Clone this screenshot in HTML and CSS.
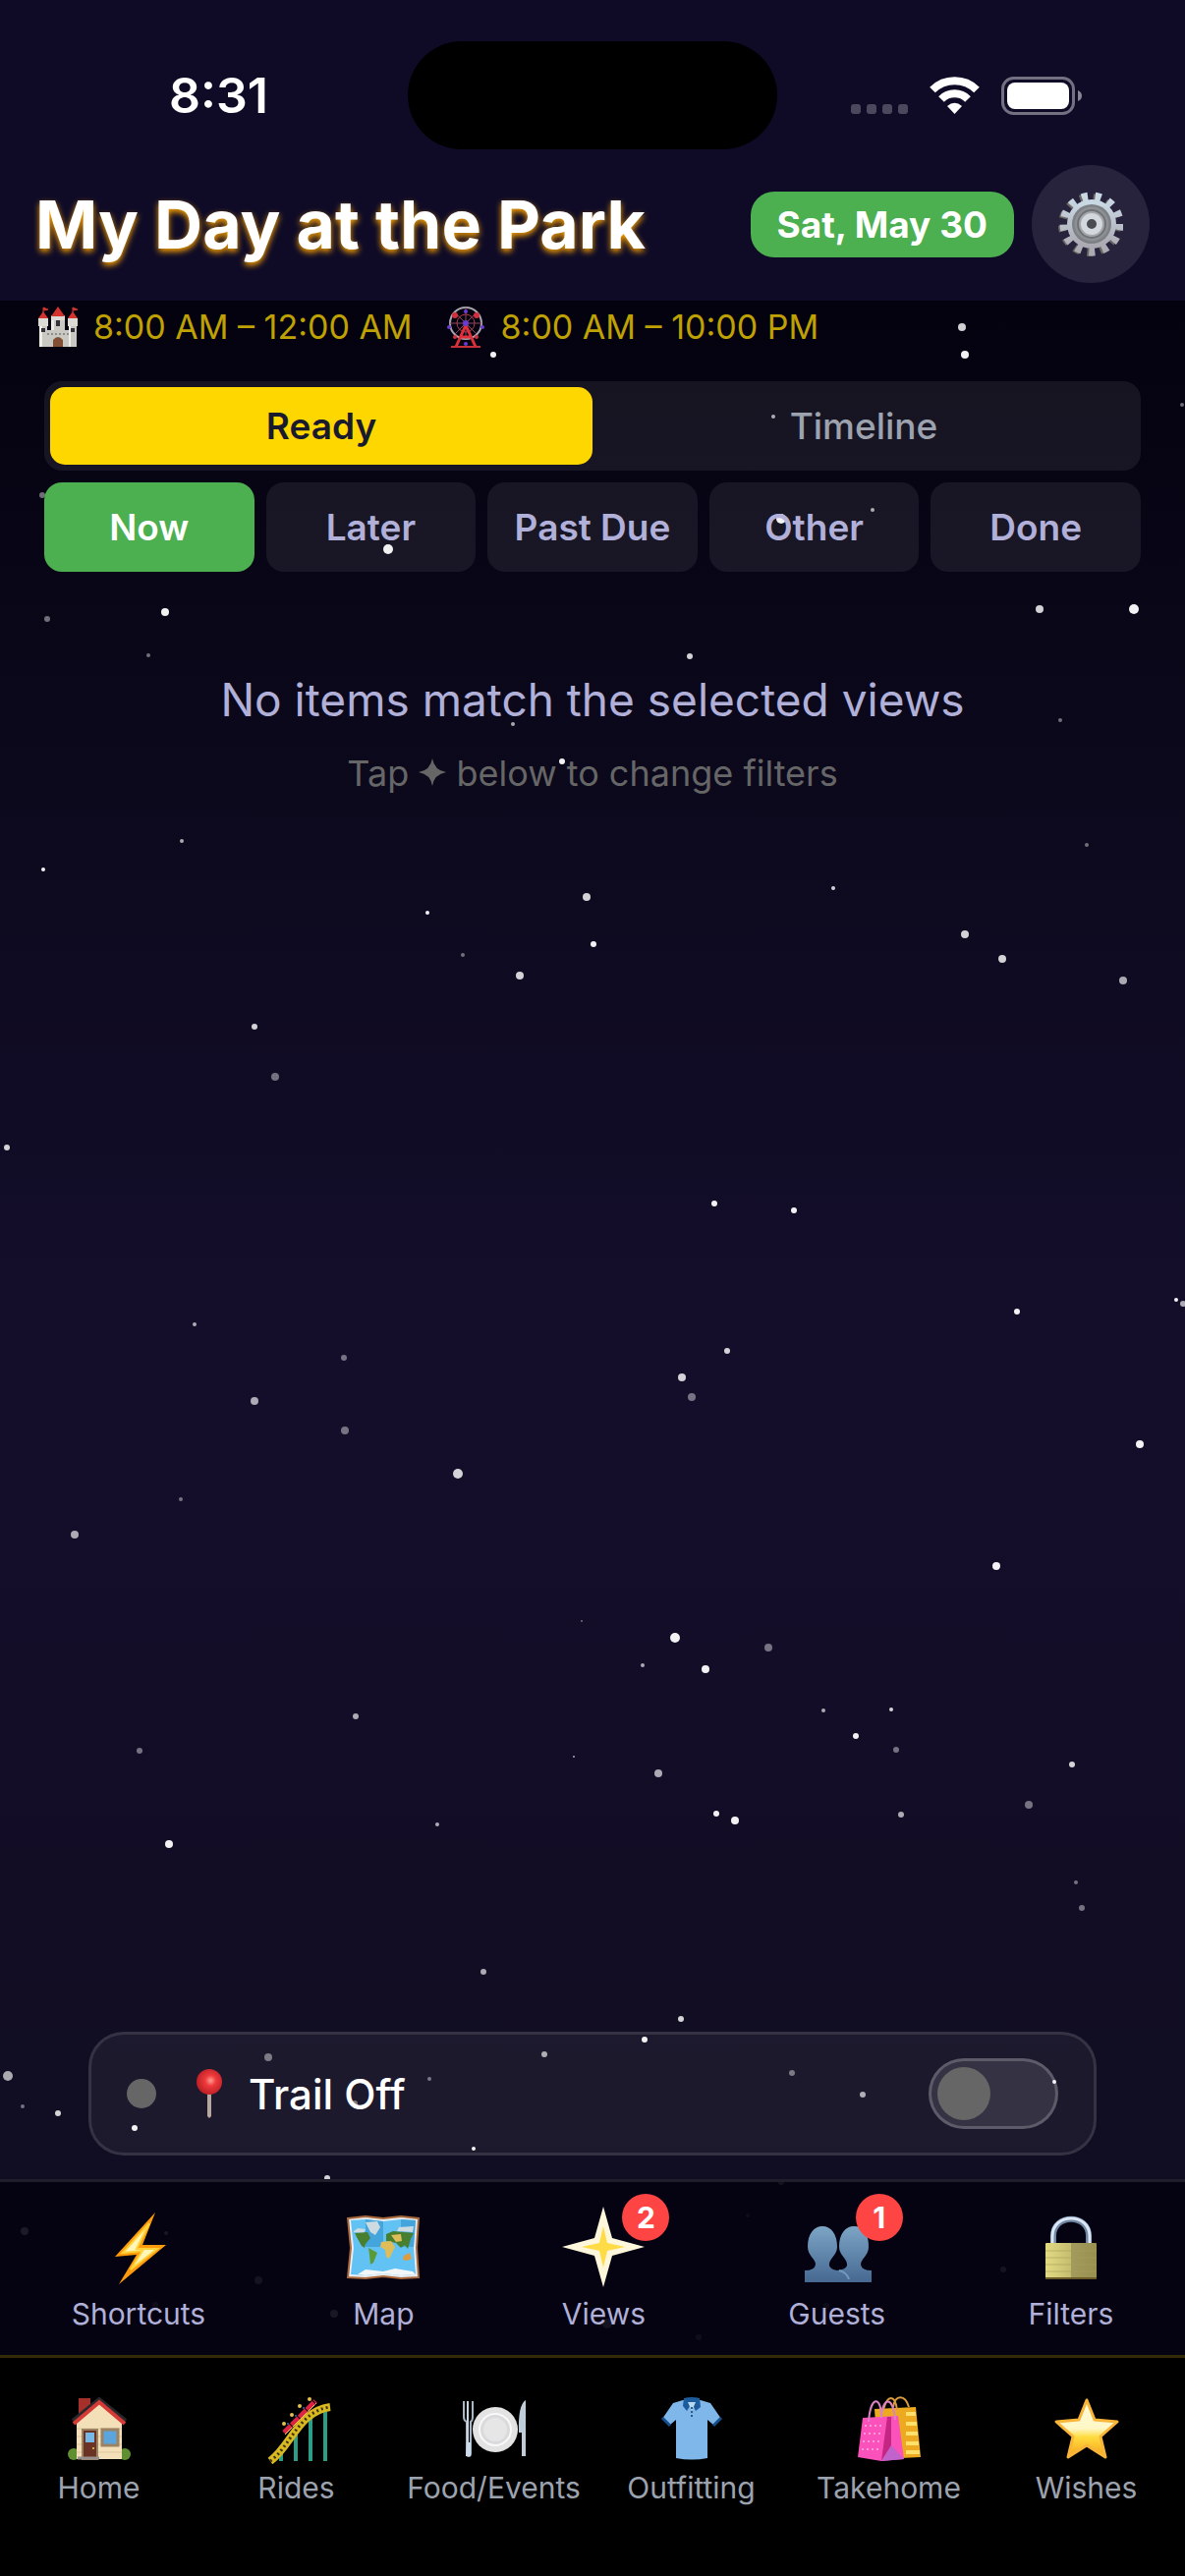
FILE: index.html
```html
<!DOCTYPE html>
<html lang="en">
<head>
  <meta charset="UTF-8">
  <meta name="viewport" content="width=device-width, initial-scale=1.0">
  <title>My Day at the Park</title>
  <link rel="stylesheet" href="styles.css">
</head>
<body>
  <!-- starfield -->
  <svg class="stars" viewBox="0 0 1206 2622" preserveAspectRatio="none" aria-hidden="true">
    <g opacity="0.95">
      <circle cx="982" cy="361" r="4"/><circle cx="502" cy="361" r="3"/><circle cx="395" cy="559" r="5"/>
      <circle cx="795" cy="528" r="5"/><circle cx="1154" cy="620" r="5"/><circle cx="168" cy="623" r="4"/>
      <circle cx="572" cy="775" r="3"/><circle cx="44" cy="885" r="2"/><circle cx="435" cy="929" r="2"/>
      <circle cx="604" cy="961" r="3"/><circle cx="727" cy="1225" r="3"/><circle cx="808" cy="1232" r="3"/>
      <circle cx="1197" cy="1323" r="2"/><circle cx="1035" cy="1335" r="3"/><circle cx="1160" cy="1470" r="4"/>
      <circle cx="1014" cy="1594" r="4"/><circle cx="687" cy="1667" r="5"/><circle cx="718" cy="1699" r="4"/>
      <circle cx="871" cy="1767" r="3"/><circle cx="729" cy="1846" r="3"/><circle cx="748" cy="1853" r="4"/>
      <circle cx="172" cy="1877" r="4"/><circle cx="656" cy="2076" r="3"/><circle cx="1073" cy="2119" r="2"/>
      <circle cx="137" cy="2166" r="3"/><circle cx="482" cy="2187" r="2"/><circle cx="25" cy="2271" r="4"/>
    </g>
    <g opacity="0.82">
      <circle cx="702" cy="668" r="3"/><circle cx="1058" cy="620" r="4"/><circle cx="979" cy="333" r="4"/>
      <circle cx="597" cy="913" r="4"/><circle cx="529" cy="993" r="4"/><circle cx="848" cy="904" r="2"/>
      <circle cx="982" cy="951" r="4"/><circle cx="1020" cy="976" r="4"/><circle cx="259" cy="1045" r="3"/>
      <circle cx="7" cy="1168" r="3"/><circle cx="740" cy="1375" r="3"/><circle cx="694" cy="1402" r="4"/>
      <circle cx="466" cy="1500" r="5"/><circle cx="907" cy="1740" r="2"/><circle cx="1091" cy="1796" r="3"/>
      <circle cx="693" cy="2055" r="3"/><circle cx="59" cy="2151" r="3"/><circle cx="333" cy="2217" r="3"/>
      <circle cx="169" cy="2273" r="2"/><circle cx="340" cy="2355" r="4"/>
    </g>
    <g opacity="0.65">
      <circle cx="185" cy="856" r="2"/><circle cx="522" cy="737" r="2"/><circle cx="787" cy="424" r="2"/>
      <circle cx="888" cy="519" r="2"/><circle cx="1143" cy="998" r="4"/><circle cx="198" cy="1348" r="2"/>
      <circle cx="259" cy="1426" r="4"/><circle cx="76" cy="1562" r="4"/><circle cx="654" cy="1695" r="2"/>
      <circle cx="838" cy="1741" r="2"/><circle cx="362" cy="1747" r="3"/><circle cx="584" cy="1788" r="1"/>
      <circle cx="670" cy="1805" r="4"/><circle cx="917" cy="1847" r="3"/><circle cx="445" cy="1857" r="2"/>
      <circle cx="492" cy="2007" r="3"/><circle cx="1204" cy="1327" r="3"/><circle cx="8" cy="2113" r="5"/>
      <circle cx="554" cy="2091" r="3"/><circle cx="878" cy="2132" r="3"/><circle cx="263" cy="2321" r="4"/>
      <circle cx="795" cy="2221" r="3"/><circle cx="1021" cy="2310" r="3"/><circle cx="618" cy="2365" r="5"/>
    </g>
    <g opacity="0.42">
      <circle cx="43" cy="504" r="3"/><circle cx="48" cy="630" r="3"/><circle cx="151" cy="667" r="2"/>
      <circle cx="1203" cy="412" r="2"/><circle cx="1079" cy="733" r="2"/><circle cx="1106" cy="860" r="2"/>
      <circle cx="471" cy="972" r="2"/><circle cx="280" cy="1096" r="4"/><circle cx="350" cy="1382" r="3"/>
      <circle cx="704" cy="1422" r="4"/><circle cx="351" cy="1456" r="4"/><circle cx="184" cy="1526" r="2"/>
      <circle cx="592" cy="1650" r="1"/><circle cx="782" cy="1677" r="4"/><circle cx="912" cy="1781" r="3"/>
      <circle cx="142" cy="1782" r="3"/><circle cx="1047" cy="1837" r="4"/><circle cx="1095" cy="1916" r="2"/>
      <circle cx="1101" cy="1942" r="3"/><circle cx="23" cy="2144" r="2"/><circle cx="273" cy="2094" r="4"/>
      <circle cx="437" cy="2116" r="2"/><circle cx="361" cy="2141" r="3"/><circle cx="806" cy="2110" r="3"/>
      <circle cx="761" cy="2255" r="2"/><circle cx="841" cy="2347" r="3"/><circle cx="711" cy="2379" r="3"/>
      <circle cx="158" cy="2346" r="3"/>
    </g>
  </svg>

  <header class="header">
    <div class="status-bar">
      <span class="clock">8:31</span>
      <span class="island"></span>
      <svg class="status-icons" viewBox="0 0 236 44" aria-hidden="true">
        <g fill="#fff" opacity="0.25">
          <rect x="0" y="31" width="10" height="10" rx="3"/><rect x="16" y="31" width="10" height="10" rx="3"/>
          <rect x="32" y="31" width="10" height="10" rx="3"/><rect x="48" y="31" width="10" height="10" rx="3"/>
        </g>
        <g fill="none" stroke="#fff" stroke-width="8">
          <path d="M83 16.500 A32 32 0 0 1 128 16.500"/>
          <path d="M92 26 A19 19 0 0 1 119 26"/>
        </g>
        <path d="M105.500 41 L98 33 Q105.500 26.500 113 33 Z" fill="#fff"/>
        <rect x="154.500" y="4.500" width="72" height="36" rx="11" fill="none" stroke="#fff" stroke-width="3" opacity="0.42"/>
        <rect x="159" y="9" width="63" height="27" rx="8" fill="#fff"/>
        <path d="M231 17 Q235 18.500 235 22.500 Q235 26.500 231 28 Z" fill="#fff" opacity="0.5"/>
      </svg>
    </div>
    <div class="title-row">
      <h1>My Day at the Park</h1>
      <button class="date-chip" type="button">Sat, May 30</button>
      <button class="settings-btn" type="button" aria-label="Settings">
        <svg viewBox="0 0 66 66" aria-hidden="true">
          <defs>
            <linearGradient id="steel" x1="0" y1="0" x2="0" y2="1">
              <stop offset="0" stop-color="#c9d9e4"/><stop offset="1" stop-color="#aba9b2"/>
            </linearGradient>
          </defs>
          <circle cx="32" cy="34" r="28" fill="none" stroke="#6c6862" stroke-width="8" stroke-dasharray="6 7.533"/>
          <circle cx="34" cy="33" r="28" fill="none" stroke="url(#steel)" stroke-width="9" stroke-dasharray="6 7.533"/>
          <circle cx="34" cy="33" r="22" fill="none" stroke="url(#steel)" stroke-width="6"/>
          <circle cx="34" cy="33" r="20" fill="#7d8084"/>
          <circle cx="34" cy="33" r="16" fill="#a4a6a9" stroke="#8d9094" stroke-width="3"/>
          <circle cx="34" cy="33" r="14" fill="none" stroke="#6f7276" stroke-width="2"/>
          <circle cx="34" cy="33" r="8" fill="#4a4c52" stroke="#d3d7de" stroke-width="6"/>
        </svg>
      </button>
    </div>
  </header>

  <main class="content">
    <div class="hours">
      <span class="park">
        <svg viewBox="0 0 40 42" aria-hidden="true">
          <path d="M1 19 H9 V24 H13 V10 H27 V24 H31 V19 H39 V41 H1 Z" fill="#c9c8c3"/>
          <path d="M1 19 H4 V41 H1 Z M13 10 H16 V24 H13 Z M31 19 H33 V41 H31 Z" fill="#eeede8"/>
          <path d="M0 12 H10 V20 H0 Z M30 12 H40 V20 H30 Z M13 9 H27 V14 H13 Z" fill="#dcdbd6"/>
          <path d="M0 12 L5 5 L10 12 Z M30 12 L35 5 L40 12 Z M13 10 L20 0 L27 10 Z" fill="#d2332f"/>
          <path d="M5 6 V1 L10 3 L5 4 M35 6 V1 L40 3 L35 4" fill="#d2332f" stroke="#d2332f"/>
          <path d="M9 28 H31" stroke="#8f8e8a" stroke-width="2" stroke-dasharray="2 2"/>
          <path d="M15 41 V34 Q20 28 25 34 V41 Z" fill="#815034"/>
          <path d="M3 22 H7 V26 H3 Z M33 22 H37 V26 H33 Z M18 14 H22 V20 H18 Z" fill="#34323c"/>
        </svg>
        8:00 AM – 12:00 AM
      </span>
      <span class="park">
        <svg viewBox="0 0 40 42" aria-hidden="true">
          <circle cx="20" cy="17" r="16" fill="none" stroke="#a6a5ad" stroke-width="2"/>
          <circle cx="20" cy="17" r="9" fill="none" stroke="#b23b4a"/>
          <path d="M20 1 V33 M4 17 H36 M9 6 L31 28 M31 6 L9 28" stroke="#8c4660"/>
          <path d="M20 19 L10 41 M20 19 L30 41 M15 31 H25" stroke="#e02f3a" stroke-width="3" fill="none"/>
          <path d="M5 41 H35" stroke="#c5303a" stroke-width="2"/>
          <g fill="#6a3bd0"><circle cx="20" cy="17" r="3"/><circle cx="20" cy="5" r="2"/><circle cx="3" cy="21" r="2"/><circle cx="37" cy="21" r="2"/><circle cx="20" cy="38" r="2"/></g>
          <g fill="#d22f3d"><circle cx="9" cy="9" r="3"/><circle cx="31" cy="9" r="3"/><circle cx="9" cy="31" r="2"/><circle cx="31" cy="31" r="2"/></g>
        </svg>
        8:00 AM – 10:00 PM
      </span>
    </div>

    <div class="segment">
      <button class="segment-btn active" type="button">Ready</button>
      <button class="segment-btn" type="button">Timeline</button>
    </div>
    <div class="filters">
      <button class="filter-btn active" type="button">Now</button>
      <button class="filter-btn" type="button">Later</button>
      <button class="filter-btn" type="button">Past Due</button>
      <button class="filter-btn" type="button">Other</button>
      <button class="filter-btn" type="button">Done</button>
    </div>

    <div class="empty">
      <p class="empty-title">No items match the selected views</p>
      <p class="empty-hint">Tap
        <svg viewBox="0 0 28 28" role="img" aria-label="Views"><path d="M14 0 Q16 12 28 14 Q16 16 14 28 Q12 16 0 14 Q12 12 14 0 Z" fill="#666"/></svg>
        below to change filters</p>
    </div>

    <div class="trail">
      <span class="trail-dot"></span>
      <label class="trail-label" for="trail">
        <svg viewBox="0 0 48 52" aria-hidden="true">
          <defs>
            <radialGradient id="pin" cx="0.55" cy="0.45" r="0.6">
              <stop offset="0" stop-color="#ff9d90"/><stop offset="0.35" stop-color="#ef3a3c"/><stop offset="1" stop-color="#b51c22"/>
            </radialGradient>
          </defs>
          <path d="M22 24 H26 V49 L24 51 L22 49 Z" fill="#b8a79f"/>
          <circle cx="24" cy="14" r="13" fill="url(#pin)"/>
        </svg>
        Trail Off
      </label>
      <input class="switch" type="checkbox" id="trail">
    </div>
  </main>

  <div class="toolbar">
    <button class="tool" type="button">
      <span class="tool-icon">
        <svg viewBox="0 0 84 84" aria-hidden="true">
          <path d="M59 7 L18 52 L40 50 L22 80 L70 40 L46 40 Z" fill="#ff9b0a"/>
          <path d="M53 18 L26 48 L46 46 L34 65 L61 44 L40 44 Z" fill="#fff6b8" stroke="#ffd23c" stroke-width="2"/>
        </svg>
      </span>
      Shortcuts
    </button>
    <button class="tool" type="button">
      <span class="tool-icon">
        <svg viewBox="0 0 84 84" aria-hidden="true">
          <path d="M6 13 L24 11 L42 13 L60 11 L78 13 L76 43 L78 73 L60 74 L42 72 L24 74 L6 73 L9 43 Z" fill="#e8eef2" stroke="#a8683c" stroke-width="2"/>
          <path d="M9 15 L24 14 L42 16 L60 14 L75 15 L73 43 L75 70 L60 71 L42 69 L24 71 L9 70 L12 43 Z" fill="#62c2f4"/>
          <path d="M24 14 L42 16 V42 H24 Z M60 14 L75 15 L73 42 H60 Z" fill="#3a9bd4" opacity="0.75"/>
          <path d="M24 17 L36 16 L39 22 L34 30 L29 27 Z M12 26 L16 23 L24 24 L22 28 L12 27 Z M58 22 L73 21 L72 27 L56 26 Z" fill="#cddbe1"/>
          <path d="M13 28 L26 27 L29 33 L24 39 L23 43 L28 46 L20 41 L15 32 Z M45 29 L52 26 L73 28 L70 34 L67 44 L64 40 L60 43 L55 38 L45 36 Z" fill="#477f2e"/>
          <path d="M27 43 L36 48 L32 58 L29 60 L28 50 Z" fill="#5b9b37"/>
          <path d="M40 37 L50 36 L54 42 L48 54 L45 52 L44 45 L39 42 Z M50 30 L60 29 L61 36 L55 37 Z" fill="#dfbd58"/>
          <path d="M63 51 L69 48 L71 54 L66 56 L62 55 Z" fill="#df9b3d"/>
          <path d="M16 70 L24 65 L42 67 L54 64 L72 67 L75 70 L60 71 L42 69 L24 71 Z" fill="#f4f7f8"/>
        </svg>
      </span>
      Map
    </button>
    <button class="tool" type="button">
      <span class="tool-icon">
        <svg viewBox="0 0 84 84" aria-hidden="true">
          <path d="M42 1 L51 33 L84 42 L51 51 L42 83 L33 51 L0 42 L33 33 Z" fill="#fff7dc"/>
          <path d="M42 21 L46 38 L64 42 L46 46 L42 63 L38 46 L20 42 L38 38 Z" fill="#ffdb45"/>
        </svg>
        <span class="badge">2</span>
      </span>
      Views
    </button>
    <button class="tool" type="button">
      <span class="tool-icon">
        <svg viewBox="0 0 84 84" aria-hidden="true">
          <defs>
            <linearGradient id="people" x1="0" y1="0" x2="0" y2="1">
              <stop offset="0" stop-color="#7ca5c5"/><stop offset="1" stop-color="#466891"/>
            </linearGradient>
          </defs>
          <path d="M27 21 C36 21 42 29 42 42 C42 51 33 54 34 61 Q35 65 42 66 Q51 65 52 61 C53 54 44 51 44 42 C44 29 50 21 59 21 C69 21 74 29 74 42 C74 51 66 54 66 60 Q67 66 77 66 V78 H9 V66 Q19 66 20 60 C20 54 12 51 12 42 C12 29 18 21 27 21 Z" fill="url(#people)"/>
          <path d="M44 66 Q52 68 54 75" fill="none" stroke="#7199bb" stroke-width="2"/>
        </svg>
        <span class="badge">1</span>
      </span>
      Guests
    </button>
    <button class="tool" type="button">
      <span class="tool-icon">
        <svg viewBox="0 0 84 84" aria-hidden="true">
          <defs>
            <linearGradient id="brass">
              <stop offset="0" stop-color="#e2db82"/><stop offset="0.49" stop-color="#c6be70"/><stop offset="0.5" stop-color="#a39b5c"/><stop offset="1" stop-color="#98904f"/>
            </linearGradient>
          </defs>
          <path d="M24 40 V31 C24 8 60 8 60 31 V40" fill="none" stroke="#7187a4" stroke-width="6"/>
          <path d="M23 40 V31 C23 7 61 7 61 31 V40" fill="none" stroke="#dbe6f4" stroke-width="3"/>
          <rect x="16" y="38" width="52" height="37" rx="1" fill="url(#brass)"/>
          <path d="M16 46 H68 M16 53 H68 M16 60 H68 M16 67 H68" stroke="#a79f5b" opacity="0.6"/>
          <path d="M16 74 H68" stroke="#6b5b28" stroke-width="2"/>
        </svg>
      </span>
      Filters
    </button>
  </div>

  <nav class="tabs">
    <a class="tab" href="#home">
      <svg viewBox="0 0 72 72" aria-hidden="true">
        <circle cx="10" cy="62" r="6" fill="#5f8f31"/><circle cx="62" cy="62" r="6" fill="#5f8f31"/>
        <path d="M15 5 H27 V20 L15 28 Z" fill="#a52f2a"/>
        <path d="M13 29 L36 9 L59 29 V67 H13 Z" fill="#f3dfb8"/>
        <path d="M13 36 H59 M13 44 H59 M13 52 H59 M13 60 H59" stroke="#dfc79d"/>
        <path d="M9 28 L36 6 L63 28" fill="none" stroke="#2b282b" stroke-width="4"/>
        <path d="M10 31 L36 9 L62 31" fill="none" stroke="#d63a36" stroke-width="4"/>
        <rect x="19" y="37" width="15" height="30" fill="#6b3324" stroke="#9b8262" stroke-width="2"/>
        <rect x="22" y="40" width="9" height="10" fill="#78b8e6"/>
        <rect x="39" y="37" width="16" height="16" fill="#5ba4dc" stroke="#9b8262" stroke-width="3"/>
        <circle cx="30" cy="56" r="1" fill="#f7c95b"/>
        <path d="M14 66 H36" stroke="#97908c" stroke-width="3"/>
      </svg>
      Home
    </a>
    <a class="tab" href="#rides">
      <svg viewBox="0 0 72 72" aria-hidden="true">
        <path d="M20 60 V69 M35 42 V69 M50 24 V69 M65 15 V69" stroke="#2a9f86" stroke-width="4"/>
        <path d="M9 69 C30 54 38 18 70 14" fill="none" stroke="#d9b922" stroke-width="8"/>
        <path d="M9 69 C30 54 38 18 70 14" fill="none" stroke="#3d3210" stroke-width="3" stroke-dasharray="2 3"/>
        <path d="M23 40 L55 8" stroke="#dc2345" stroke-width="5" stroke-dasharray="10 1"/>
        <path d="M24 42 L56 10" stroke="#ffd34f" stroke-width="1" stroke-dasharray="10 1"/>
        <g fill="#e5c04a"><circle cx="23" cy="31" r="2"/><circle cx="31" cy="22" r="2"/><circle cx="39" cy="13" r="2"/><circle cx="49" cy="6" r="2"/></g>
        <g fill="#2d6fb5"><circle cx="27" cy="31" r="1"/><circle cx="35" cy="23" r="1"/><circle cx="43" cy="15" r="1"/></g>
      </svg>
      Rides
    </a>
    <a class="tab" href="#food">
      <svg viewBox="0 0 72 72" aria-hidden="true">
        <path d="M5 8 V24 Q5 28 8 29 V61 Q8 64 10 64 Q12 64 12 61 V29 Q14 28 14 24 V8" fill="none" stroke="#a9b6c4" stroke-width="2"/>
        <path d="M9 8 V60" stroke="#c8d5e4" stroke-width="2"/>
        <path d="M8 50 H12 V64 H7 Z" fill="#cbdcec"/>
        <path d="M68 7 Q60 12 61 40 H64 V64 H68 Z" fill="#bfcddb"/>
        <circle cx="37" cy="37" r="23" fill="#e3e3e4"/>
        <circle cx="37" cy="37" r="16" fill="#d9dadb" stroke="#f8f8f8" stroke-width="2"/>
        <circle cx="37" cy="37" r="12" fill="#e6e6e6"/>
      </svg>
      Food/Events
    </a>
    <a class="tab" href="#outfitting">
      <svg viewBox="0 0 72 72" aria-hidden="true">
        <path d="M27 7 H45 L55 10 L66 26 L58 32 L52 27 V66 Q36 69 20 66 V27 L14 32 L6 26 L17 10 Z" fill="#7fb7ea"/>
        <path d="M6 25 L14 33 M66 25 L58 33" stroke="#164f8c" stroke-width="3"/>
        <path d="M28 5 Q36 3 44 5 L45 14 L40 18 L36 10 L31 18 L27 13 Z" fill="#1c5b9c"/>
        <path d="M32 9 H40 L36 18 Z" fill="#b8d8ef"/>
        <path d="M36 14 V24" stroke="#315a83" stroke-width="2" stroke-dasharray="2 2"/>
      </svg>
      Outfitting
    </a>
    <a class="tab" href="#takehome">
      <svg viewBox="0 0 72 72" aria-hidden="true">
        <path d="M21 16 L63 14 L68 65 L48 66 L24 60 Z" fill="#eda91f"/>
        <path d="M53 21 H63 M53 31 H64 M53 41 H65 M53 51 H66 M53 60 H67" stroke="#ffe06a" stroke-width="4"/>
        <path d="M30 17 C34 1 42 1 44 17 M40 14 C42 1 52 1 56 14" fill="none" stroke="#d99a3e" stroke-width="2"/>
        <path d="M9 25 L45 23 L51 67 L28 69 L4 65 Z" fill="#fb51bb"/>
        <path d="M34 24 L28 69 L38 54 L38 24 Z" fill="#c42683"/>
        <path d="M28 69 L38 53 L51 67 Z" fill="#c063ca"/>
        <path d="M11 33 H31 M10 41 H30 M9 49 H29 M8 57 H28" stroke="#ff9bdd" stroke-width="2" stroke-dasharray="2 3"/>
        <path d="M15 29 C17 2 28 2 28 25 M28 23 C30 3 40 3 42 27" fill="none" stroke="#dc83c2" stroke-width="2"/>
      </svg>
      Takehome
    </a>
    <a class="tab" href="#wishes">
      <svg viewBox="0 0 72 72" aria-hidden="true">
        <defs>
          <linearGradient id="gold" x1="0" y1="0" x2="0" y2="1">
            <stop offset="0" stop-color="#fffbe0"/><stop offset="0.5" stop-color="#fff7c4"/><stop offset="0.65" stop-color="#ffdc3e"/><stop offset="1" stop-color="#f6a31c"/>
          </linearGradient>
        </defs>
        <path d="M36 7 L44 27 L67 29 L50 44 L55 65 L36 53 L17 65 L22 44 L5 29 L28 27 Z" fill="url(#gold)" stroke="#f9b43a" stroke-width="3" stroke-linejoin="round"/>
      </svg>
      Wishes
    </a>
  </nav>
</body>
</html>
```

FILE: styles.css
```css
* {
  box-sizing: border-box;
}

body {
  margin: 0;
  min-height: 100vh;
  position: relative;
  display: flex;
  flex-direction: column;
  font-family: Inter, "Liberation Sans", sans-serif;
  color: #fff;
  background: linear-gradient(#000008 0%, #04020f 12%, #0c091d 31%, #140e2b 52%, #130d28 65%, #110d22 80%, #100e24 100%);
}

button {
  font-family: inherit;
  border: none;
  padding: 0;
  cursor: pointer;
}

.stars {
  position: absolute;
  top: 0;
  left: 0;
  width: 100%;
  height: 100%;
  fill: #fff;
}

.header,
.content,
.toolbar,
.tabs {
  position: relative;
}

/* header */
.header {
  background: #0f0b27;
}

.status-bar {
  display: grid;
  grid-template-columns: 1fr 376px 1fr;
  align-items: center;
  justify-items: center;
  padding: 42px 30px 0;
}

.clock {
  font-size: 50px;
  font-weight: 600;
}

.island {
  width: 100%;
  height: 110px;
  border-radius: 55px;
  background: #000;
}

.status-icons {
  width: 236px;
  height: 44px;
}

.title-row {
  display: flex;
  align-items: center;
  gap: 18px;
  padding: 16px 36px 18px;
}

h1 {
  flex: 1;
  margin: 0;
  font-size: 68px;
  line-height: 84px;
  font-weight: 700;
  white-space: nowrap;
  text-shadow: 0 3px 6px #ffa500;
}

.date-chip {
  height: 67px;
  padding: 0 27px;
  border-radius: 24px;
  background: #4caf50;
  color: #fff;
  font-size: 37px;
  font-weight: 700;
}

.settings-btn {
  display: flex;
  align-items: center;
  justify-content: center;
  width: 120px;
  height: 120px;
  border-radius: 50%;
  background: #27233d;
}

.settings-btn svg {
  width: 66px;
  height: 66px;
}

/* park hours */
.content {
  flex: 1;
  display: flex;
  flex-direction: column;
}

.hours {
  display: flex;
  gap: 34px;
  padding: 4px 39px 32px;
}

.park {
  display: flex;
  align-items: center;
  gap: 16px;
  font-size: 34px;
  line-height: 46px;
  color: #bfa103;
}

.park svg {
  width: 40px;
  height: 42px;
}

/* view switcher */
.segment {
  display: flex;
  margin: 0 45px 12px;
  padding: 6px;
  border-radius: 18px;
  background: rgba(255, 255, 255, 0.07);
}

.segment-btn {
  flex: 1;
  height: 79px;
  border-radius: 15px;
  background: none;
  color: #9ca3af;
  font-size: 37px;
  font-weight: 500;
}

.segment-btn.active {
  background: #ffd700;
  color: #1a1a2e;
  font-weight: 600;
}

.filters {
  display: grid;
  grid-template-columns: repeat(5, 1fr);
  gap: 12px;
  margin: 0 45px;
}

.filter-btn {
  height: 91px;
  border-radius: 18px;
  background: rgba(255, 255, 255, 0.07);
  color: #b0b0d8;
  font-size: 37px;
  font-weight: 600;
}

.filter-btn.active {
  background: #4caf50;
  color: #fff;
}

.empty {
  padding: 100px 45px;
  text-align: center;
}

.empty p {
  margin: 0;
}

.empty-title {
  font-size: 46px;
  line-height: 60px;
  color: #b0b0d8;
}

.empty .empty-hint {
  margin-top: 24px;
  font-size: 36px;
  line-height: 42px;
  color: #666;
}

.empty-hint svg {
  width: 28px;
  height: 28px;
}

/* trail card */
.trail {
  display: flex;
  align-items: center;
  gap: 30px;
  height: 126px;
  margin: auto 90px 24px;
  padding: 0 36px;
  border: 3px solid rgba(255, 255, 255, 0.11);
  border-radius: 36px;
  background: rgba(255, 255, 255, 0.05);
}

.trail-dot {
  width: 30px;
  height: 30px;
  border-radius: 50%;
  background: #666;
}

.trail-label {
  flex: 1;
  display: flex;
  align-items: center;
  gap: 16px;
  font-size: 42px;
  font-weight: 500;
}

.trail-label svg {
  width: 48px;
  height: 52px;
}

.switch {
  appearance: none;
  display: flex;
  align-items: center;
  width: 132px;
  height: 72px;
  margin: 0;
  padding: 6px;
  border: 3px solid rgba(255, 255, 255, 0.2);
  border-radius: 36px;
  background: rgba(255, 255, 255, 0.11);
}

.switch::before {
  content: "";
  width: 54px;
  height: 54px;
  border-radius: 50%;
  background: #666;
}

.switch:checked {
  justify-content: flex-end;
}

/* quick tools */
.toolbar {
  display: flex;
  justify-content: space-around;
  padding: 24px 0;
  border-top: 3px solid #201e2b;
  background: rgba(4, 2, 15, 0.9);
}

.tool {
  display: flex;
  flex-direction: column;
  align-items: center;
  gap: 8px;
  background: none;
  color: #b0b0d8;
  font-size: 30px;
  line-height: 36px;
}

.tool-icon {
  position: relative;
  display: flex;
  justify-content: center;
  width: 72px;
  height: 84px;
}

.tool-icon svg {
  flex: none;
  width: 84px;
  height: 84px;
}

.badge {
  position: absolute;
  top: -12px;
  right: -31px;
  width: 48px;
  height: 48px;
  border-radius: 50%;
  background: #ff4444;
  color: #fff;
  font-size: 30px;
  line-height: 48px;
  font-weight: 700;
  text-align: center;
}

/* bottom tabs */
.tabs {
  display: grid;
  grid-template-columns: repeat(6, 1fr);
  padding: 36px 0 72px;
  border-top: 3px solid #332b08;
  background: #000;
}

.tab {
  display: flex;
  flex-direction: column;
  align-items: center;
  gap: 6px;
  color: #9ca3af;
  font-size: 30px;
  line-height: 36px;
  text-decoration: none;
}

.tab svg {
  width: 72px;
  height: 72px;
}
```
